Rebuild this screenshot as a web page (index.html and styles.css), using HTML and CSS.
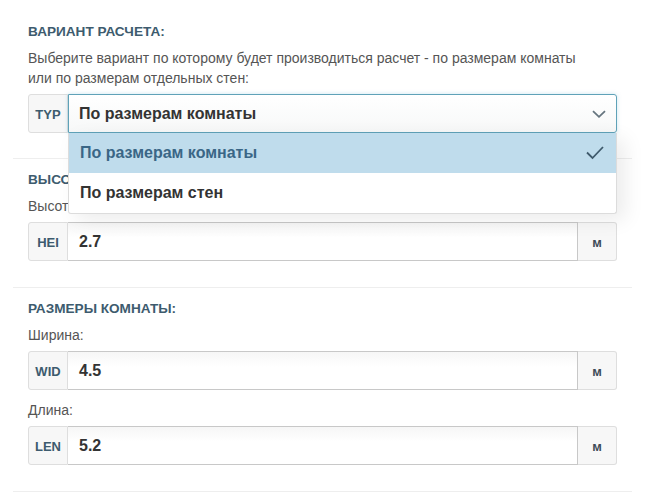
FILE: index.html
```html
<!DOCTYPE html>
<html lang="ru">
<head>
<meta charset="utf-8">
<link rel="stylesheet" href="styles.css">
</head>
<body>
<div class="page">
  <section class="block first">
    <h3 class="title">ВАРИАНТ РАСЧЕТА:</h3>
    <p class="desc">Выберите вариант по которому будет производиться расчет - по размерам комнаты<br>или по размерам отдельных стен:</p>
    <div class="group">
      <span class="addon">TYP</span>
      <div class="select">
        <span class="value">По размерам комнаты</span>
        <svg class="chev" width="14" height="8" viewBox="0 0 14 8"><path d="M1 1.2 L7 6.8 L13 1.2" fill="none" stroke="#66757f" stroke-width="1.8"/></svg>
        <ul class="menu">
          <li class="opt selected">По размерам комнаты
            <svg class="check" width="18" height="14" viewBox="0 0 18 14"><path d="M1 6.5 L6.5 12 L17 1" fill="none" stroke="#3f5a6c" stroke-width="1.8"/></svg>
          </li>
          <li class="opt">По размерам стен</li>
        </ul>
      </div>
    </div>
  </section>
  <section class="block">
    <h3 class="title">ВЫСОТА ПОТОЛКА:</h3>
    <label class="label">Высота потолка:</label>
    <div class="group">
      <span class="addon">HEI</span>
      <div class="input">2.7</div>
      <span class="addon suffix">м</span>
    </div>
  </section>
  <section class="block">
    <h3 class="title">РАЗМЕРЫ КОМНАТЫ:</h3>
    <label class="label">Ширина:</label>
    <div class="group">
      <span class="addon">WID</span>
      <div class="input">4.5</div>
      <span class="addon suffix">м</span>
    </div>
    <label class="label">Длина:</label>
    <div class="group">
      <span class="addon">LEN</span>
      <div class="input">5.2</div>
      <span class="addon suffix">м</span>
    </div>
  </section>
</div>
</body>
</html>
```
FILE: styles.css
```css
* { box-sizing: border-box; }
html, body { margin: 0; padding: 0; background: #fff; }
body { font-family: "Liberation Sans", Arial, sans-serif; color: #555; }
.page { padding: 10px 14px 0 13px; }
.block {
  padding: 11px 15px 26px;
  border-bottom: 1px solid #eeeeee;
}
.block.first { padding-top: 12px; padding-bottom: 25px; }
.title {
  margin: 0 0 6px;
  font-size: 13.6px;
  line-height: 20px;
  font-weight: bold;
  color: #3d5b6e;
}
.desc {
  margin: 0 0 6px;
  font-size: 14px;
  line-height: 20px;
  color: #555;
}
.label {
  display: block;
  margin: 0 0 6px;
  font-size: 14px;
  line-height: 20px;
  color: #555;
}
.group {
  display: flex;
  height: 39px;
  margin-bottom: 10px;
}
.group:last-child { margin-bottom: 0; }
.addon {
  flex: 0 0 40px;
  display: flex;
  align-items: center;
  justify-content: center;
  background: #f7f7f7;
  border: 1px solid #dedede;
  border-radius: 3px 0 0 3px;
  font-size: 13px;
  font-weight: bold;
  color: #3d5b6e;
  padding-top: 1px;
}
.addon.suffix {
  flex-basis: 39px;
  border-radius: 0 3px 3px 0;
  border-left: 0;
  color: #3f4b57;
  font-size: 13px;
}
.input {
  flex: 1;
  display: flex;
  align-items: center;
  padding: 0 11px;
  border: 1px solid #c8c8c8;
  border-left: 0;
  background: linear-gradient(#f6f6f6, #fff 40%);
  font-size: 16px;
  font-weight: bold;
  color: #333;
}
.select {
  position: relative;
  flex: 1;
  display: flex;
  align-items: center;
  padding: 0 10px;
  border: 1px solid #5fa2b8;
  border-radius: 0 3px 3px 0;
  background: linear-gradient(#fff, #f7f8f8);
  box-shadow: 0 0 4px rgba(110, 180, 210, 0.35);
  font-size: 16px;
  font-weight: bold;
  color: #333;
}
.value { flex: 1; }
.menu {
  position: absolute;
  left: -1px;
  right: -1px;
  top: 38px;
  margin: 0;
  padding: 0;
  list-style: none;
  background: #fff;
  border: 1px solid #dcdcdc;
  border-top: 0;
  border-radius: 0 0 3px 3px;
  box-shadow: 8px 6px 20px rgba(0, 0, 0, 0.08);
  z-index: 5;
}
.opt {
  height: 40px;
  display: flex;
  align-items: center;
  justify-content: space-between;
  padding: 0 12px 0 11px;
  font-size: 16px;
  font-weight: bold;
  color: #333;
}
.opt.selected {
  background: #bfdcec;
  color: #3a6686;
}
```
